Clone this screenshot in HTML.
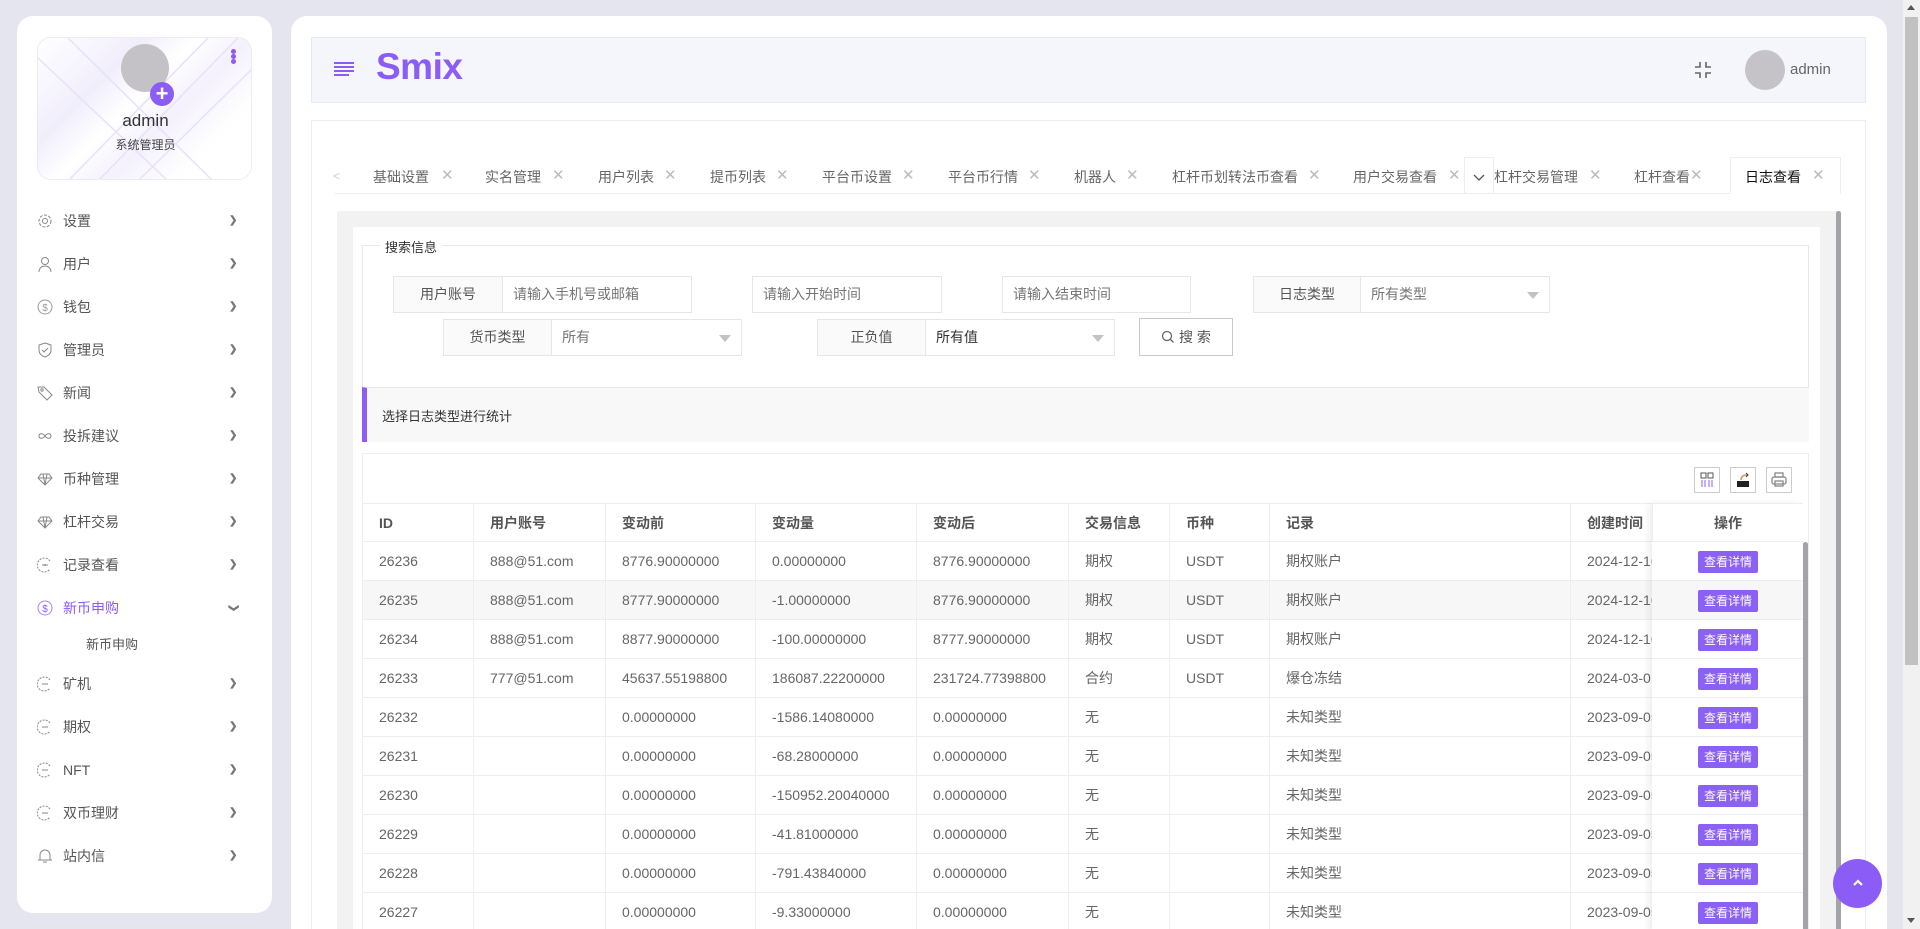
<!DOCTYPE html>
<html><head><meta charset="utf-8">
<style>
*{box-sizing:border-box;margin:0;padding:0}
html{width:1920px;height:929px;overflow:hidden}
body{width:1920px;height:929px;overflow:hidden;background:#e4e5ef;font-family:"Liberation Sans","Noto Sans CJK SC",sans-serif;position:relative;color:#555}
.abs{position:absolute}
.side{left:17px;top:16px;width:255px;height:897px;background:#fff;border-radius:16px}
.prof{left:20px;top:21px;width:215px;height:143px;border:1px solid #ececf3;border-radius:14px;overflow:hidden;background:linear-gradient(135deg,#fff 0%,#f1eefc 30%,#fff 45%,#f4f1fd 60%,#fff 80%)}
.mi{position:absolute;left:27px;width:210px;height:30px;font-size:14px;color:#555;line-height:30px}
.mi .ic{position:absolute;left:-7px;top:7px;width:16px;height:16px}
.mi .tx{position:absolute;left:19px}
.mi .ar{position:absolute;left:185px;top:0;font-size:10px;color:#777;font-weight:bold}
.main{left:291px;top:16px;width:1596px;height:913px;background:#fff;border-radius:16px 16px 0 0}
.hdr{left:311px;top:37px;width:1555px;height:66px;background:#f5f6fb;border:1px solid #e9e9f2}
.cont{left:311px;top:120px;width:1555px;height:809px;background:#fff;border:1px solid #ececf3;border-bottom:0}
.tab{position:absolute;top:167px;font-size:14px;color:#666}
.x{position:absolute;top:166px;font-size:15px;color:#bbb}
.lab{position:absolute;height:37px;background:#fafafa;border:1px solid #e6e6e6;font-size:14px;color:#555;text-align:center;line-height:35px}
.inp{position:absolute;height:37px;background:#fff;border:1px solid #e6e6e6;font-size:14px;color:#757575;line-height:35px;padding-left:10px}
.tri{position:absolute;right:10px;top:15px;border:6px solid transparent;border-top:7px solid #c2c2c2;border-bottom:0}
table{border-collapse:collapse;position:absolute;left:362px;top:503px;table-layout:fixed;font-family:"Liberation Sans","Noto Sans CJK SC",sans-serif}
td{height:39px;border:1px solid #eee;font-size:14px;color:#666;padding-left:16px;white-space:nowrap;overflow:hidden}
tr.h td{color:#555;font-weight:bold;height:38px}
tr.hv td{background:#f7f7f7}
.op{position:absolute;left:1652px;top:503px;width:151px;background:#fff;box-shadow:-4px 0 6px rgba(0,0,0,.06)}
.op div{height:39px;border-bottom:1px solid #eee;position:relative}
.btn{position:absolute;left:46px;top:9px;width:60px;height:22px;background:#8b60f5;color:#fff;font-size:12px;text-align:center;line-height:22px;border-radius:2px}
.tb{position:absolute;top:467px;width:26px;height:26px;border:1px solid #ccc;background:#fff}
</style></head><body>
<div class="abs side">
 <div class="abs prof">
  <svg class="abs" style="left:0;top:0" width="215" height="143"><g stroke="#e6defb" stroke-width="1.5" fill="none" opacity=".9"><line x1="0" y1="20" x2="130" y2="143"/><line x1="30" y1="0" x2="175" y2="143"/><line x1="170" y1="0" x2="30" y2="143"/><line x1="200" y1="0" x2="60" y2="143"/><line x1="215" y1="30" x2="100" y2="143"/></g></svg>
  <div class="abs" style="left:83px;top:6px;width:48px;height:48px;border-radius:50%;background:#c4c2c7"></div>
  <div class="abs" style="left:112px;top:44px;width:24px;height:24px;border-radius:50%;background:#8b5cf6;color:#fff;font-size:22px;line-height:23px;text-align:center;font-weight:bold">+</div>
  <div class="abs" style="left:0;width:215px;top:73px;text-align:center;font-size:17px;color:#333">admin</div>
  <div class="abs" style="left:0;width:215px;top:98px;text-align:center;font-size:12px;color:#444">系统管理员</div>
  <div class="abs" style="left:193px;top:11px;width:5px;height:5px;border-radius:50%;background:#8b5cf6;box-shadow:0 5px 0 #8b5cf6,0 10px 0 #8b5cf6"></div>
 </div>
</div>
<div class="abs" style="left:17px;top:0">
 <div class="mi" style="top:206px"><svg class="ic" viewBox="0 0 16 16"><circle cx="8" cy="8" r="2.5" fill="none" stroke="#888"/><circle cx="8" cy="8" r="6" fill="none" stroke="#888" stroke-dasharray="3 1.5"/></svg><span class="tx">设置</span><span class="ar">❯</span></div>
 <div class="mi" style="top:249px"><svg class="ic" viewBox="0 0 16 16"><circle cx="8" cy="5" r="3.5" fill="none" stroke="#888"/><path d="M2 16c0-4 3-6 6-6s6 2 6 6" fill="none" stroke="#888"/></svg><span class="tx">用户</span><span class="ar">❯</span></div>
 <div class="mi" style="top:292px"><svg class="ic" viewBox="0 0 16 16"><circle cx="8" cy="8" r="7" fill="none" stroke="#999"/><text x="8" y="12" font-size="10" text-anchor="middle" fill="#999">$</text></svg><span class="tx">钱包</span><span class="ar">❯</span></div>
 <div class="mi" style="top:335px"><svg class="ic" viewBox="0 0 16 16"><path d="M8 1l6 2v5c0 4-3 6-6 7-3-1-6-3-6-7V3z" fill="none" stroke="#888"/><path d="M5 8l2 2 4-4" fill="none" stroke="#888"/></svg><span class="tx">管理员</span><span class="ar">❯</span></div>
 <div class="mi" style="top:378px"><svg class="ic" viewBox="0 0 16 16"><path d="M1 2h6l8 8-5 5-8-8z" fill="none" stroke="#888"/><circle cx="5" cy="5" r="1.2" fill="none" stroke="#888"/></svg><span class="tx">新闻</span><span class="ar">❯</span></div>
 <div class="mi" style="top:421px"><svg class="ic" viewBox="0 0 16 16"><path d="M8 8c-2-3-6-3-6 0s4 3 6 0 6-3 6 0-4 3-6 0" fill="none" stroke="#888"/></svg><span class="tx">投拆建议</span><span class="ar">❯</span></div>
 <div class="mi" style="top:464px"><svg class="ic" viewBox="0 0 16 16"><path d="M4 3h8l3 4-7 7-7-7z M1 7h14 M6 3l2 11 2-11" fill="none" stroke="#888"/></svg><span class="tx">币种管理</span><span class="ar">❯</span></div>
 <div class="mi" style="top:507px"><svg class="ic" viewBox="0 0 16 16"><path d="M4 3h8l3 4-7 7-7-7z M1 7h14 M6 3l2 11 2-11" fill="none" stroke="#888"/></svg><span class="tx">杠杆交易</span><span class="ar">❯</span></div>
 <div class="mi" style="top:550px"><svg class="ic" viewBox="0 0 16 16"><path d="M13 4A7 7 0 1 0 13 12" fill="none" stroke="#888" stroke-dasharray="2 1.2"/><path d="M5 8h6" stroke="#888"/><circle cx="8" cy="8" r="1" fill="#888"/></svg><span class="tx">记录查看</span><span class="ar">❯</span></div>
 <div class="mi" style="top:593px;color:#8b5cf6"><svg class="ic" viewBox="0 0 16 16"><circle cx="8" cy="8" r="7" fill="none" stroke="#a585f8"/><text x="8" y="12" font-size="10" text-anchor="middle" fill="#8b5cf6">$</text></svg><span class="tx">新币申购</span><span class="ar" style="transform:rotate(90deg)">❯</span></div>
 <div class="mi" style="top:630px;left:69px;font-size:13px">新币申购</div>
 <div class="mi" style="top:669px"><svg class="ic" viewBox="0 0 16 16"><path d="M13 4A7 7 0 1 0 13 12" fill="none" stroke="#888" stroke-dasharray="2 1.2"/><path d="M5 8h6" stroke="#888"/></svg><span class="tx">矿机</span><span class="ar">❯</span></div>
 <div class="mi" style="top:712px"><svg class="ic" viewBox="0 0 16 16"><path d="M13 4A7 7 0 1 0 13 12" fill="none" stroke="#888" stroke-dasharray="2 1.2"/><path d="M5 8h6" stroke="#888"/></svg><span class="tx">期权</span><span class="ar">❯</span></div>
 <div class="mi" style="top:755px"><svg class="ic" viewBox="0 0 16 16"><path d="M13 4A7 7 0 1 0 13 12" fill="none" stroke="#888" stroke-dasharray="2 1.2"/><path d="M5 8h6" stroke="#888"/></svg><span class="tx">NFT</span><span class="ar">❯</span></div>
 <div class="mi" style="top:798px"><svg class="ic" viewBox="0 0 16 16"><path d="M13 4A7 7 0 1 0 13 12" fill="none" stroke="#888" stroke-dasharray="2 1.2"/><path d="M5 8h6" stroke="#888"/></svg><span class="tx">双币理财</span><span class="ar">❯</span></div>
 <div class="mi" style="top:841px"><svg class="ic" viewBox="0 0 16 16"><path d="M3 12V7a5 5 0 0 1 10 0v5zM1 12h14M6 14h4" fill="none" stroke="#888"/></svg><span class="tx">站内信</span><span class="ar">❯</span></div>
</div>

<div class="abs main"></div>
<div class="abs hdr"></div>
<svg class="abs" style="left:334px;top:62px" width="22" height="16"><g stroke="#8b5cf6" stroke-width="2"><line x1="0" y1="1" x2="20" y2="1"/><line x1="0" y1="5" x2="20" y2="5"/><line x1="0" y1="9" x2="20" y2="9"/><line x1="0" y1="13" x2="15" y2="13"/></g></svg>
<div class="abs" style="left:376px;top:46px;font-size:37px;font-weight:bold;color:#8b5cf6;letter-spacing:-0.5px">Smix</div>
<svg class="abs" style="left:1695px;top:62px" width="16" height="16"><g stroke="#666" stroke-width="1.6" fill="none"><path d="M5 0v5H0M11 0v5h5M5 16v-5H0M11 16v-5h5"/></g></svg>
<div class="abs" style="left:1745px;top:50px;width:40px;height:40px;border-radius:50%;background:#c5c3c8"></div>
<div class="abs" style="left:1790px;top:61px;font-size:15px;color:#666">admin</div>

<div class="abs cont"></div>
<div class="abs" style="left:335px;top:193px;width:1506px;height:1px;background:#eee"></div>
<div class="tab" style="left:333px;color:#ccc;font-size:12px;top:169px">&lt;</div>
<div class="tab" style="left:373px">基础设置</div><div class="x" style="left:441px">✕</div>
<div class="tab" style="left:485px">实名管理</div><div class="x" style="left:552px">✕</div>
<div class="tab" style="left:598px">用户列表</div><div class="x" style="left:664px">✕</div>
<div class="tab" style="left:710px">提币列表</div><div class="x" style="left:776px">✕</div>
<div class="tab" style="left:822px">平台币设置</div><div class="x" style="left:902px">✕</div>
<div class="tab" style="left:948px">平台币行情</div><div class="x" style="left:1028px">✕</div>
<div class="tab" style="left:1074px">机器人</div><div class="x" style="left:1126px">✕</div>
<div class="tab" style="left:1172px">杠杆币划转法币查看</div><div class="x" style="left:1308px">✕</div>
<div class="tab" style="left:1353px">用户交易查看</div><div class="x" style="left:1448px">✕</div>
<div class="tab" style="left:1494px">杠杆交易管理</div><div class="x" style="left:1589px">✕</div>
<div class="tab" style="left:1634px">杠杆查看</div><div class="x" style="left:1690px">✕</div>
<div class="abs" style="left:1464px;top:157px;width:30px;height:37px;background:#fff;border:1px solid #eee"><svg style="position:absolute;left:8px;top:16px" width="12" height="8"><path d="M1 1l5 5 5-5" stroke="#555" fill="none" stroke-width="1.3"/></svg></div>
<div class="abs" style="left:1730px;top:157px;width:111px;height:37px;background:#fff;border:1px solid #eee;border-bottom-color:#fff"></div>
<div class="tab" style="left:1745px;color:#111">日志查看</div><div class="x" style="left:1812px">✕</div>

<div class="abs" style="left:337px;top:211px;width:1504px;height:718px;background:#f2f2f2"></div>
<div class="abs" style="left:1836px;top:211px;width:5px;height:718px;background:#a3a3a8;border-radius:3px 3px 0 0"></div>
<div class="abs" style="left:353px;top:227px;width:1467px;height:702px;background:#fff"></div>
<div class="abs" style="left:362px;top:245px;width:1447px;height:143px;border:1px solid #e6e6e6;border-bottom:0"></div>
<div class="abs" style="left:380px;top:237px;padding:0 5px;background:#fff;font-size:13px;color:#333">搜索信息</div>

<div class="lab" style="left:393px;top:276px;width:110px">用户账号</div><div class="inp" style="left:502px;top:276px;width:190px">请输入手机号或邮箱</div>
<div class="inp" style="left:752px;top:276px;width:190px">请输入开始时间</div>
<div class="inp" style="left:1002px;top:276px;width:189px">请输入结束时间</div>
<div class="lab" style="left:1253px;top:276px;width:108px">日志类型</div><div class="inp" style="left:1360px;top:276px;width:190px">所有类型<span class="tri"></span></div>
<div class="lab" style="left:443px;top:319px;width:109px">货币类型</div><div class="inp" style="left:551px;top:319px;width:191px">所有<span class="tri"></span></div>
<div class="lab" style="left:817px;top:319px;width:109px">正负值</div><div class="inp" style="left:925px;top:319px;width:190px;color:#333">所有值<span class="tri"></span></div>
<div class="abs" style="left:1139px;top:318px;width:94px;height:38px;border:1px solid #c9c9c9;background:#fff;font-size:14px;color:#555;line-height:36px;text-align:center"><svg style="vertical-align:-2px;margin-right:4px" width="14" height="14"><circle cx="6" cy="6" r="4.5" stroke="#666" fill="none" stroke-width="1.3"/><path d="M9.5 9.5l3 3" stroke="#666" stroke-width="1.3"/></svg>搜 索</div>

<div class="abs" style="left:362px;top:387px;width:1447px;height:55px;background:#f8f8f8;border-top:1px solid #e6e6e6;border-left:5px solid #8b5cf6"></div>
<div class="abs" style="left:382px;top:406px;font-size:13px;color:#333">选择日志类型进行统计</div>

<div class="abs" style="left:362px;top:453px;width:1447px;height:476px;border:1px solid #eee;border-bottom:0"></div>
<div class="tb" style="left:1694px"><svg width="24" height="24"><g stroke="#8b5cf6" fill="none"><rect x="6" y="5" width="5" height="5" stroke="#555"/><rect x="13" y="5" width="5" height="5" stroke="#555"/><path d="M7 12v7M10 12v7M14 12v7M17 12v7"/></g></svg></div>
<div class="tb" style="left:1730px"><svg width="24" height="24"><path d="M6 13h12v6H6z" fill="#222"/><path d="M10 12c0-4 3-5 6-5" stroke="#c96" fill="none" stroke-width="1.5"/><path d="M15 5l2 2-2 2" stroke="#333" fill="none"/></svg></div>
<div class="tb" style="left:1766px"><svg width="24" height="24"><g stroke="#888" fill="none" stroke-width="1.3"><rect x="8" y="5" width="8" height="4"/><rect x="5" y="9" width="14" height="7" rx="2"/><rect x="8" y="13" width="8" height="5"/></g></svg></div>

<table>
<colgroup><col style="width:111px"><col style="width:132px"><col style="width:150px"><col style="width:161px"><col style="width:152px"><col style="width:101px"><col style="width:100px"><col style="width:301px"><col style="width:160px"></colgroup>
<tr class="h"><td>ID</td><td>用户账号</td><td>变动前</td><td>变动量</td><td>变动后</td><td>交易信息</td><td>币种</td><td>记录</td><td>创建时间</td></tr>
<tr><td>26236</td><td>888@51.com</td><td>8776.90000000</td><td>0.00000000</td><td>8776.90000000</td><td>期权</td><td>USDT</td><td>期权账户</td><td>2024-12-16 10:00</td></tr>
<tr class="hv"><td>26235</td><td>888@51.com</td><td>8777.90000000</td><td>-1.00000000</td><td>8776.90000000</td><td>期权</td><td>USDT</td><td>期权账户</td><td>2024-12-16 10:00</td></tr>
<tr><td>26234</td><td>888@51.com</td><td>8877.90000000</td><td>-100.00000000</td><td>8777.90000000</td><td>期权</td><td>USDT</td><td>期权账户</td><td>2024-12-16 10:00</td></tr>
<tr><td>26233</td><td>777@51.com</td><td>45637.55198800</td><td>186087.22200000</td><td>231724.77398800</td><td>合约</td><td>USDT</td><td>爆仓冻结</td><td>2024-03-01 10:00</td></tr>
<tr><td>26232</td><td></td><td>0.00000000</td><td>-1586.14080000</td><td>0.00000000</td><td>无</td><td></td><td>未知类型</td><td>2023-09-05 10:00</td></tr>
<tr><td>26231</td><td></td><td>0.00000000</td><td>-68.28000000</td><td>0.00000000</td><td>无</td><td></td><td>未知类型</td><td>2023-09-05 10:00</td></tr>
<tr><td>26230</td><td></td><td>0.00000000</td><td>-150952.20040000</td><td>0.00000000</td><td>无</td><td></td><td>未知类型</td><td>2023-09-05 10:00</td></tr>
<tr><td>26229</td><td></td><td>0.00000000</td><td>-41.81000000</td><td>0.00000000</td><td>无</td><td></td><td>未知类型</td><td>2023-09-05 10:00</td></tr>
<tr><td>26228</td><td></td><td>0.00000000</td><td>-791.43840000</td><td>0.00000000</td><td>无</td><td></td><td>未知类型</td><td>2023-09-05 10:00</td></tr>
<tr><td>26227</td><td></td><td>0.00000000</td><td>-9.33000000</td><td>0.00000000</td><td>无</td><td></td><td>未知类型</td><td>2023-09-05 10:00</td></tr>
</table>
<div class="op">
<div style="height:39px;border-top:1px solid #eee;border-left:1px solid #eee;text-align:center;line-height:38px;font-weight:bold;font-size:14px;color:#555">操作</div>
<div><span class="btn">查看详情</span></div><div style="background:#f7f7f7"><span class="btn">查看详情</span></div><div><span class="btn">查看详情</span></div><div><span class="btn">查看详情</span></div><div><span class="btn">查看详情</span></div><div><span class="btn">查看详情</span></div><div><span class="btn">查看详情</span></div><div><span class="btn">查看详情</span></div><div><span class="btn">查看详情</span></div><div><span class="btn">查看详情</span></div>
</div>
<div class="abs" style="left:1803px;top:542px;width:5px;height:387px;background:#a3a3a8;border-radius:3px 3px 0 0"></div>

<div class="abs" style="left:1833px;top:859px;width:49px;height:49px;border-radius:50%;background:#8b5cf6"><svg style="position:absolute;left:19px;top:20px" width="12" height="8"><path d="M2 6l4-4 4 4" stroke="#fff" stroke-width="2.2" fill="none"/></svg></div>

<div class="abs" style="left:1903px;top:0;width:17px;height:929px;background:#f1f1f1"></div>
<div class="abs" style="left:1905px;top:17px;width:13px;height:648px;background:#c1c1c1"></div>
<div class="abs" style="left:1907px;top:5px;border:4px solid transparent;border-bottom:5px solid #555;border-top:0"></div>
<div class="abs" style="left:1907px;top:918px;border:4px solid transparent;border-top:5px solid #555;border-bottom:0"></div>
</body></html>
